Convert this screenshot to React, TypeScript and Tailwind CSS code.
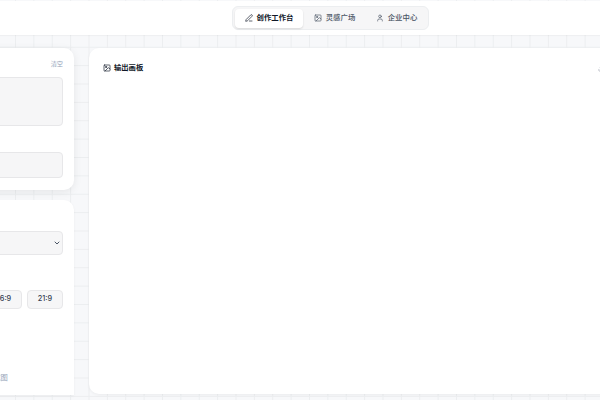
import { ChevronDown, Download, Image, PenLine, User } from 'lucide-react'

const tabs = [
  { label: '灵感广场', icon: Image },
  { label: '企业中心', icon: User },
]

export default function App() {
  return (
    <div className="h-[400px] w-[600px] overflow-hidden bg-[#f7f8fa] bg-[linear-gradient(#eceef0_1px,transparent_1px),linear-gradient(90deg,#eceef0_1px,transparent_1px)] bg-[size:18.38px_18.38px] bg-[position:15px_10px] pt-[1px] font-['Inter','Noto_Sans_CJK_SC',sans-serif]">
      {/* Header */}
      <header className="flex h-[34px] items-center justify-center bg-white pl-[61px] shadow-[0_1px_1px_rgba(0,0,0,0.03)]">
        <nav className="flex h-[24px] w-[197px] items-center gap-[1px] rounded-[6px] border border-[#eceef0] bg-[#f6f6f7] pl-[2px]">
          <button className="flex h-[19px] w-[68px] shrink-0 items-center justify-center gap-[4px] rounded-[4px] bg-white text-[7.4px] font-semibold text-gray-900 shadow-[0_1px_2px_rgba(0,0,0,0.12)]">
            <PenLine size={8} />
            创作工作台
          </button>
          {tabs.map((t) => (
            <button key={t.label} className="flex h-[19px] w-[61px] shrink-0 items-center justify-center gap-[4px] text-[7.4px] font-medium text-gray-600">
              <t.icon size={8} />
              {t.label}
            </button>
          ))}
        </nav>
      </header>

      <main className="mt-[13px] flex gap-[15px]">
        {/* Left column */}
        <div className="ml-[-326px] flex w-[400px] shrink-0 flex-col gap-[10px]">
          <section className="h-[142px] rounded-[10px] bg-white pl-[12px] pr-[11px] pt-[11px] shadow-[0_2px_8px_rgba(0,0,0,0.08)]">
            <div className="flex justify-end text-[6.2px] leading-[10px] text-[#94a3b8]">清空</div>
            <div className="mt-[8px] h-[49px] rounded-[4px] border border-[#e7e7e9] bg-[#f6f6f7]" />
            <div className="mt-[26px] h-[26px] rounded-[4px] border border-[#e7e7e9] bg-[#f6f6f7]" />
          </section>
          <section className="h-[195px] rounded-t-[10px] bg-white pl-[12px] pr-[11px] pt-[31px] shadow-[0_1px_3px_rgba(0,0,0,0.05)]">
            <div className="flex h-[24px] items-center justify-end rounded-[4px] border border-[#e7e7e9] bg-[#f6f6f7] pr-[1px]">
              <ChevronDown size={8} strokeWidth={3} className="text-gray-600" />
            </div>
            <div className="mt-[35px] flex justify-end gap-[5px]">
              <div className="flex h-[19px] w-[36px] items-center justify-center rounded-[4px] border border-[#e7e7e9] bg-[#f6f6f7] text-[7.3px] font-medium text-gray-700">16:9</div>
              <div className="flex h-[19px] w-[36px] items-center justify-center rounded-[4px] border border-[#e7e7e9] bg-[#f6f6f7] text-[7.3px] font-medium text-gray-700">21:9</div>
            </div>
            <div className="ml-[300px] mt-[64px] text-[7.3px] leading-[10px] text-[#94a3b8]">生成图</div>
          </section>
        </div>

        {/* Output panel */}
        <section className="h-[346px] w-[530px] shrink-0 rounded-[10px] bg-white px-[14px] pt-[15px] shadow-[0_1px_3px_rgba(0,0,0,0.05)]">
          <div className="flex items-center justify-between">
            <div className="flex items-center gap-[3px] text-[7.3px] font-semibold text-gray-900">
              <Image size={8} />
              输出画板
            </div>
            <Download size={7} className="text-gray-400" />
          </div>
        </section>
      </main>
    </div>
  )
}
